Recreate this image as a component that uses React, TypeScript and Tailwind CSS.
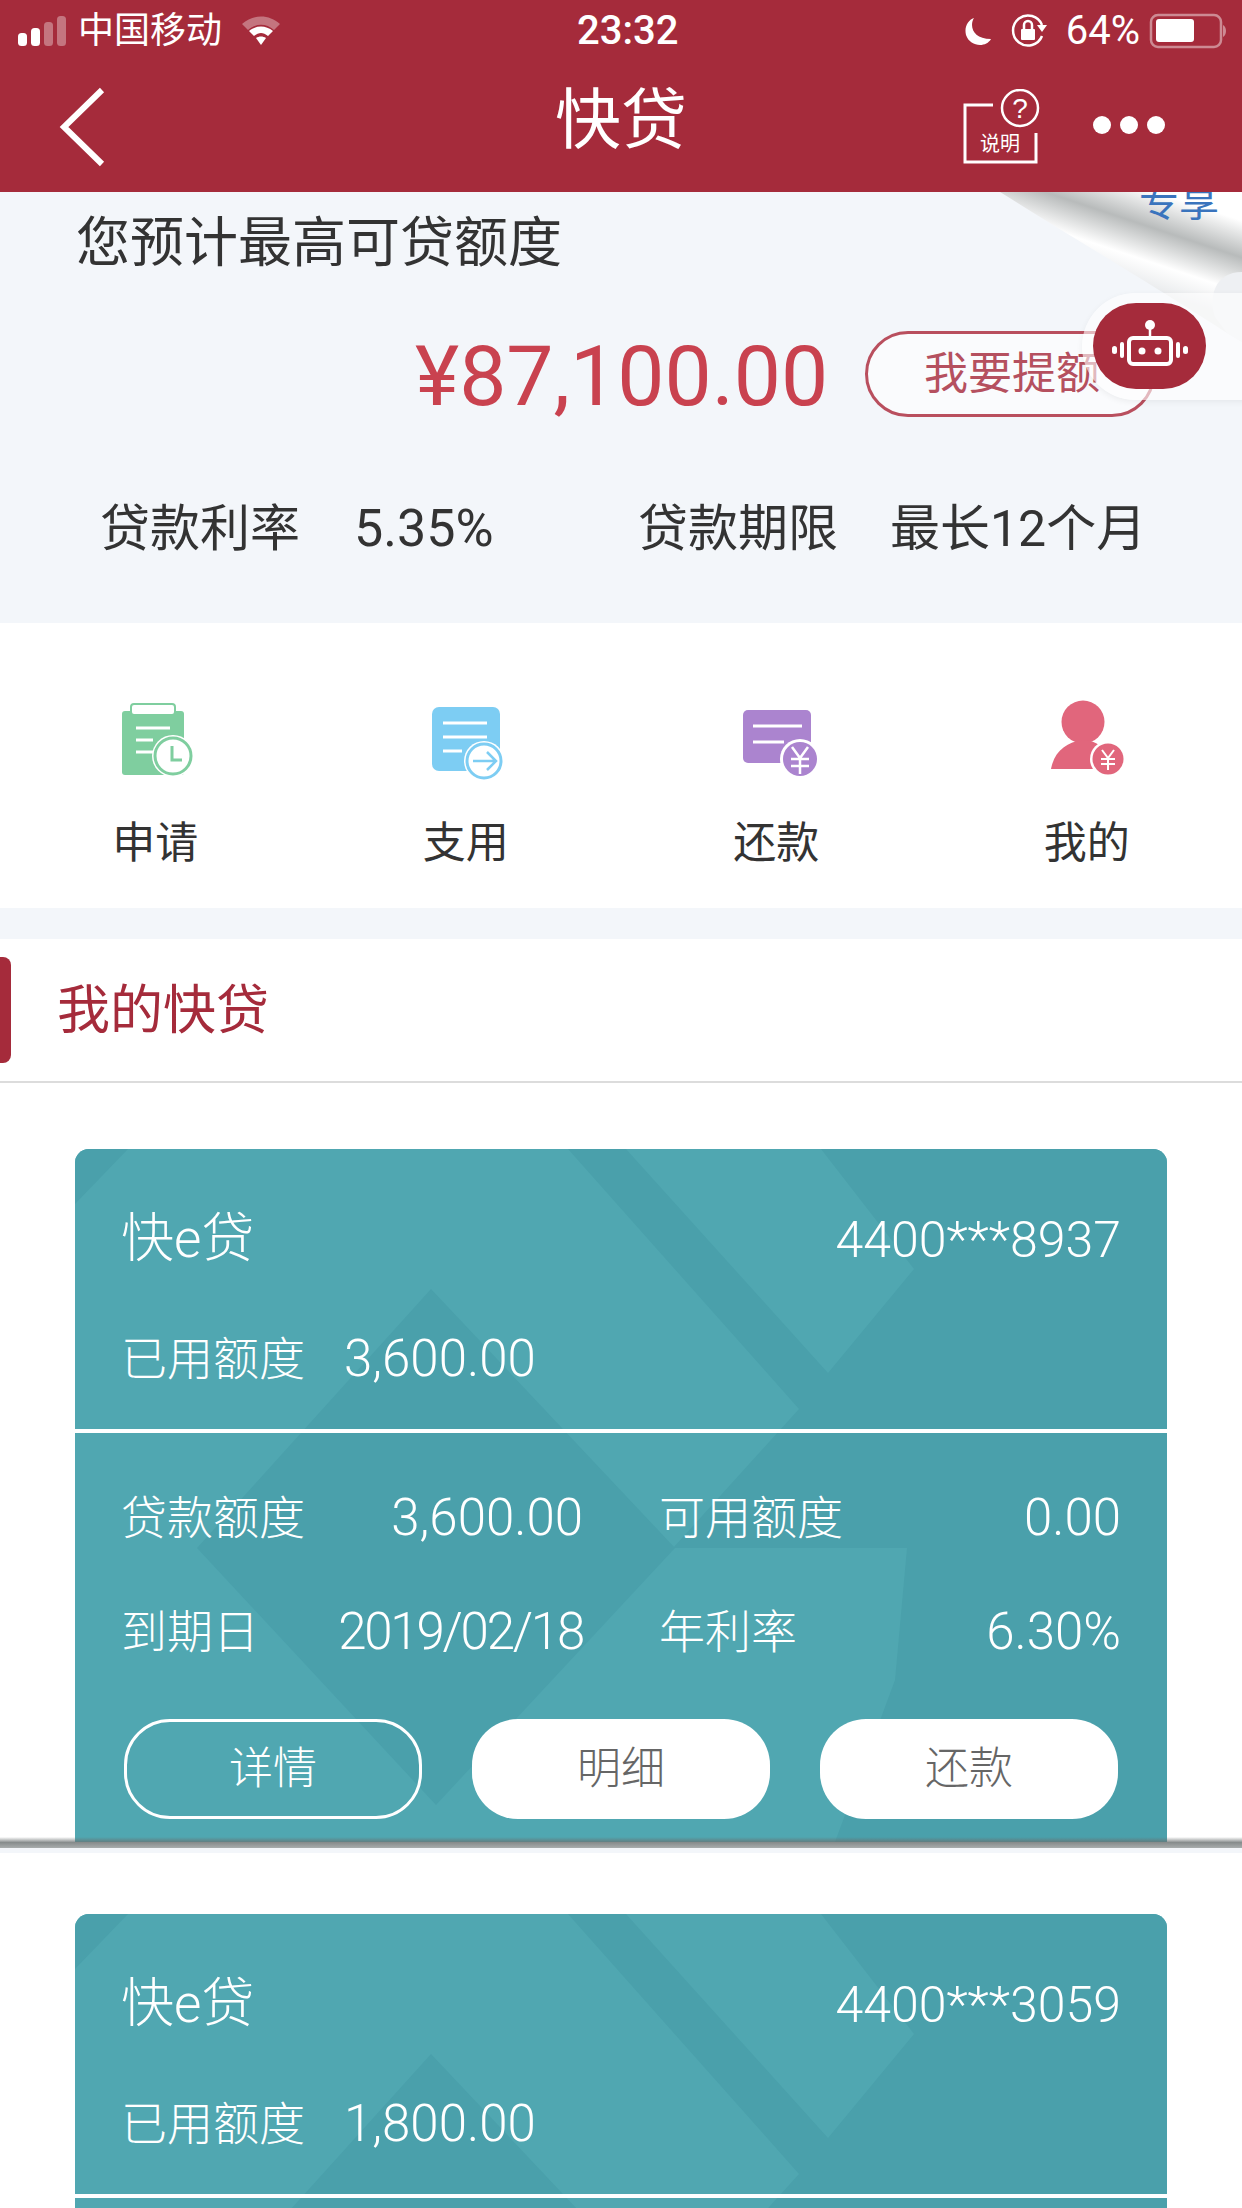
import type { ReactNode } from "react";

const cardBg = (
    <svg className="absolute inset-0" width="1092" height="693" viewBox="0 0 1092 693">
        <path d="M0 0H53L0 55Z" fill="#4aa0ab" />
        <path d="M493 0H551L753 224L839 120L746 0H1092V693H760L820 531L832 399H598L724 260Z" fill="#4aa0ab" />
        <path d="M356 140L600 399L361 656L122 399Z" fill="#4aa0ab" />
    </svg>
);

function StatusBar() {
    return (
        <div className="h-[62px] relative flex items-center text-white">
            <div className="flex items-center pl-[18px]">
                <svg width="48" height="30" viewBox="0 0 48 30">
                    <rect x="0" y="17" width="9" height="13" rx="3.5" fill="#fff" />
                    <rect x="13" y="12" width="9" height="18" rx="3.5" fill="#fff" />
                    <rect x="26" y="6" width="9" height="24" rx="3.5" fill="#fff" fillOpacity="0.35" />
                    <rect x="39" y="0" width="9" height="30" rx="3.5" fill="#fff" fillOpacity="0.35" />
                </svg>
                <span className="text-[36px] leading-none ml-[12px]">中国移动</span>
                <svg className="ml-[18px]" width="42" height="32" viewBox="0 0 40 32">
                    <path d="M1 9C12 -1 28 -1 39 9L33 15C25 8 15 8 7 15Z" fill="#fff" fillOpacity="0.35" />
                    <path d="M8 16C15 10 25 10 32 16L27 21C22 17 18 17 13 21Z" fill="#fff" />
                    <path d="M15 23C18 21 22 21 25 23L20 30Z" fill="#fff" />
                </svg>
            </div>
            <span className="absolute left-[577px] text-[40px] font-medium leading-none">23:32</span>
            <div className="ml-auto flex items-center pr-[15px]">
                <svg width="30" height="32" viewBox="0 0 30 32">
                    <path d="M11 3C6 11 10 24 28 24C23 33 7 32 3 20C1 12 5 5 11 3Z" fill="#fff" />
                </svg>
                <svg className="ml-[18px]" width="36" height="34" viewBox="0 0 36 34">
                    <path d="M31 22A15 15 0 1 1 31 11" fill="none" stroke="#fff" strokeWidth="2.5" />
                    <path d="M26 11H36L31 18Z" fill="#fff" />
                    <rect x="10" y="15" width="14" height="11" rx="1" fill="#fff" />
                    <path d="M13 15V11A4 4 0 0 1 21 11V15" fill="none" stroke="#fff" strokeWidth="2.5" />
                </svg>
                <span className="text-[40px] leading-none ml-[19px]">64%</span>
                <svg className="ml-[9px]" width="78" height="36" viewBox="0 0 78 36">
                    <rect x="2" y="2" width="70" height="32" rx="7" fill="none" stroke="#fff" strokeOpacity="0.45" strokeWidth="2.5" />
                    <rect x="7" y="6" width="38" height="23" rx="3" fill="#fff" />
                    <path d="M74 12C78 14 78 22 74 24Z" fill="#fff" fillOpacity="0.45" />
                </svg>
            </div>
        </div>
    );
}

function NavBar() {
    return (
        <div className="h-[130px] flex items-center relative text-white">
            <svg className="ml-[58px]" width="50" height="82" viewBox="0 0 50 82">
                <path d="M44 4L6 41L44 78" fill="none" stroke="#fff" strokeWidth="6" />
            </svg>
            <span className="absolute left-0 right-0 top-[21px] text-center text-[66px] leading-[76px]">快贷</span>
            <svg className="ml-auto" width="80" height="76" viewBox="0 0 80 76">
                <path d="M32 16H4V73H75V44" fill="none" stroke="#fff" strokeWidth="3" />
                <circle cx="59" cy="19" r="18" fill="none" stroke="#fff" strokeWidth="2.5" />
                <text x="59" y="29" textAnchor="middle" fill="#fff" fontSize="28" fontFamily="Liberation Sans">?</text>
                <text x="39" y="62" textAnchor="middle" fill="#fff" fontSize="20" fontFamily="Noto Sans CJK SC">说明</text>
            </svg>
            <div className="flex gap-[9px] ml-[52px] mr-[77px] mb-[4px]">
                <span className="w-[18px] h-[18px] rounded-full bg-white" />
                <span className="w-[18px] h-[18px] rounded-full bg-white" />
                <span className="w-[18px] h-[18px] rounded-full bg-white" />
            </div>
        </div>
    );
}

function Hero() {
    return (
        <div className="h-[431px] bg-[#f3f6fa] relative overflow-hidden">
            {/* page curl */}
            <svg className="absolute top-0 left-[990px]" width="252" height="170" viewBox="0 0 252 170">
                <defs>
                    <linearGradient id="curl" gradientUnits="userSpaceOnUse" x1="154" y1="-4" x2="124" y2="86">
                        <stop offset="0" stopColor="#ffffff" />
                        <stop offset="0.37" stopColor="#b8bbbb" />
                        <stop offset="0.72" stopColor="#ffffff" />
                        <stop offset="1" stopColor="#e8eaec" />
                    </linearGradient>
                </defs>
                <path d="M10 0H252V150L237 141C190 110 90 50 10 0Z" fill="url(#curl)" />
                <path d="M252 80C225 80 218 105 225 125L237 141L252 150Z" fill="#eef0f3" />
            </svg>
            <span className="absolute left-[1139px] top-[-14px] text-[40px] leading-[50px] text-[#3a74bd]">专享</span>
            <div className="h-[100px] pl-[76px] pt-[2px] flex items-center text-[54px] text-[#333333] relative">您预计最高可贷额度</div>
            <div className="mt-[39px] h-[86px] pl-[415px] flex items-center relative">
                <span className="w-[450px] text-[84px] leading-none text-[#c9424f] pt-[6px]">¥87,100.00</span>
                <span className="w-[290px] h-[86px] rounded-full border-[3px] border-[#b94f5e] bg-white/60 flex items-center pl-[56px] text-[44px] text-[#b5505f]">我要提额</span>
            </div>
            <div className="mt-[82px] h-[60px] flex items-center pl-[100px] text-[50px] text-[#333333]">
                <span className="w-[254px]">贷款利率</span>
                <span className="w-[284px] text-[52px]">5.35%</span>
                <span className="w-[252px]">贷款期限</span>
                <span>最长12个月</span>
            </div>
        </div>
    );
}

function MenuItem({ label, icon }: { label: string; icon: ReactNode }) {
    return (
        <div className="flex flex-col items-center">
            {icon}
            <span className="mt-[35px] text-[43px] leading-[56px] text-[#333333]">{label}</span>
        </div>
    );
}

function Menu() {
    return (
        <div className="h-[285px] bg-white grid grid-cols-4 pt-[77px]">
            <MenuItem
                label="申请"
                icon={
                    <svg width="90" height="80" viewBox="0 0 90 80">
                        <path d="M16 11H71Q74 11 74 14V72Q74 75 71 75H15Q12 75 12 72V14Q12 11 15 11Z" fill="#7fce9f" />
                        <rect x="21" y="4" width="44" height="11" rx="3" fill="#fff" stroke="#7fce9f" strokeWidth="2" />
                        <path d="M26 28H60M26 40H43M26 52H43" stroke="#fff" strokeWidth="3" />
                        <circle cx="63" cy="56" r="21" fill="#fff" />
                        <circle cx="63" cy="56" r="18" fill="#fff" stroke="#7fce9f" strokeWidth="3" />
                        <path d="M62 46V60H72" fill="none" stroke="#7fce9f" strokeWidth="3" />
                    </svg>
                }
            />
            <MenuItem
                label="支用"
                icon={
                    <svg width="90" height="80" viewBox="0 0 90 80">
                        <rect x="11" y="7" width="68" height="64" rx="7" fill="#7dcdf3" />
                        <path d="M22 23H66M22 37H66M22 51H41" stroke="#fff" strokeWidth="3" />
                        <circle cx="63" cy="61" r="20" fill="#fff" />
                        <circle cx="63" cy="61" r="17" fill="#fff" stroke="#7dcdf3" strokeWidth="3" />
                        <path d="M52 61H75M66 52L75 61L66 70" fill="none" stroke="#7dcdf3" strokeWidth="2.5" />
                    </svg>
                }
            />
            <MenuItem
                label="还款"
                icon={
                    <svg width="90" height="80" viewBox="0 0 90 80">
                        <rect x="12" y="10" width="68" height="53" rx="5" fill="#ab84cf" />
                        <path d="M22 26H71M22 42H53" stroke="#fff" strokeWidth="3" />
                        <circle cx="69" cy="59" r="20" fill="#fff" />
                        <circle cx="69" cy="59" r="17" fill="#ab84cf" />
                        <path d="M61 47L69 58L77 47M60 59H78M60 66H78M69 58V74" fill="none" stroke="#fff" strokeWidth="2.5" />
                    </svg>
                }
            />
            <MenuItem
                label="我的"
                icon={
                    <svg width="90" height="80" viewBox="0 0 90 80">
                        <circle cx="41" cy="22" r="21.5" fill="#e1667c" />
                        <path d="M9 69C12 52 24 42 41 40C55 40 68 50 72 69Z" fill="#e1667c" />
                        <circle cx="66" cy="59" r="18" fill="#fff" />
                        <circle cx="66" cy="59" r="15.5" fill="#e1667c" />
                        <path d="M60 50L66 58L72 50M59 59H73M59 64H73M66 58V70" fill="none" stroke="#fff" strokeWidth="2" />
                    </svg>
                }
            />
        </div>
    );
}

function InfoRow({ a, b, c, d }: { a: string; b: ReactNode; c: string; d: string }) {
    return (
        <div className="h-[60px] flex items-center whitespace-nowrap">
            <span className="w-[190px] text-[46px]">{a}</span>
            <span className="w-[272px] text-right text-[51px]">{b}</span>
            <span className="ml-[76px] w-[190px] text-[46px]">{c}</span>
            <span className="w-[272px] text-right text-[51px]">{d}</span>
        </div>
    );
}

function LoanCard({ account, used, children }: { account: string; used: string; children?: ReactNode }) {
    return (
        <div className="mx-[75px] h-[693px] shrink-0 rounded-t-[14px] bg-[#50a7b1] relative overflow-hidden text-white font-light">
            {cardBg}
            <div className="relative">
                <div className="h-[280px] pt-[61px] px-[46px]">
                    <div className="h-[60px] flex items-center justify-between">
                        <span className="text-[53px]">快e贷</span>
                        <span className="text-[50px]">{account}</span>
                    </div>
                    <div className="flex items-center h-[60px] mt-[59px]">
                        <span className="w-[223px] text-[46px]">已用额度</span>
                        <span className="text-[51px]">{used}</span>
                    </div>
                </div>
                <div className="h-[4px] bg-white" />
                {children}
            </div>
        </div>
    );
}

export default function App() {
    return (
        <div
            lang="zh-CN"
            className="w-[1242px] h-[2208px] overflow-hidden relative bg-white font-['Roboto','Noto_Sans_CJK_SC',sans-serif]"
        >
            <div className="bg-[#a52b3b] h-[192px]">
                <StatusBar />
                <NavBar />
            </div>
            <Hero />
            <Menu />
            <div className="h-[31px] bg-[#f3f6fa]" />
            <div className="h-[144px] border-b-[2px] border-[#dcdcdc] bg-white flex items-center">
                <div className="w-[11px] h-[106px] rounded-r-[8px] bg-[#a52b3b]" />
                <span className="ml-[46px] pt-[2px] text-[53px] leading-none text-[#a52b3b]">我的快贷</span>
            </div>
            <div className="pt-[66px]">
                <LoanCard account="4400***8937" used="3,600.00">
                    <div className="px-[46px] pt-[55px]">
                        <InfoRow a="贷款额度" b="3,600.00" c="可用额度" d="0.00" />
                        <div className="h-[54px]" />
                        <InfoRow a="到期日" b={<span className="tracking-[-2.2px]">2019/02/18</span>} c="年利率" d="6.30%" />
                        <div className="mt-[57px] flex gap-[50px] pl-[3px]">
                            <button className="w-[298px] h-[100px] rounded-[46px] border-[3px] border-white text-[44px]">详情</button>
                            <button className="w-[298px] h-[100px] rounded-[46px] bg-white text-[44px] text-[#666666]">明细</button>
                            <button className="w-[298px] h-[100px] rounded-[46px] bg-white text-[44px] text-[#666666]">还款</button>
                        </div>
                    </div>
                </LoanCard>
                <div className="relative -mt-[5px] h-[11px] bg-gradient-to-b from-black/0 via-[#6a7070]/80 to-[#a9adad]" />
                <div className="h-[5px] bg-[#f3f6fa]" />
                <div className="h-[61px]" />
                <LoanCard account="4400***3059" used="1,800.00" />
            </div>

            {/* floating assistant */}
            <div className="absolute left-[1082px] top-[293px] w-[200px] h-[107px] rounded-l-[54px] bg-white/60 shadow-[0_2px_6px_rgba(0,0,0,0.06)]" />
            <div className="absolute left-[1093px] top-[303px] w-[113px] h-[86px] rounded-[43px] bg-[#a52b3b] flex items-center justify-center">
                <svg width="80" height="56" viewBox="0 0 80 56">
                    <circle cx="40" cy="7" r="5" fill="#fff" />
                    <path d="M40 10V20" stroke="#fff" strokeWidth="2.5" />
                    <rect x="19" y="20" width="42" height="26" rx="4" fill="none" stroke="#fff" strokeWidth="4" />
                    <circle cx="32" cy="33" r="3.5" fill="#fff" />
                    <circle cx="48" cy="33" r="3.5" fill="#fff" />
                    <rect x="10" y="24" width="4" height="16" rx="2" fill="#fff" />
                    <rect x="66" y="24" width="4" height="16" rx="2" fill="#fff" />
                    <rect x="2" y="28" width="5" height="8" rx="2.5" fill="#fff" />
                    <rect x="73" y="28" width="5" height="8" rx="2.5" fill="#fff" />
                </svg>
            </div>
        </div>
    );
}
